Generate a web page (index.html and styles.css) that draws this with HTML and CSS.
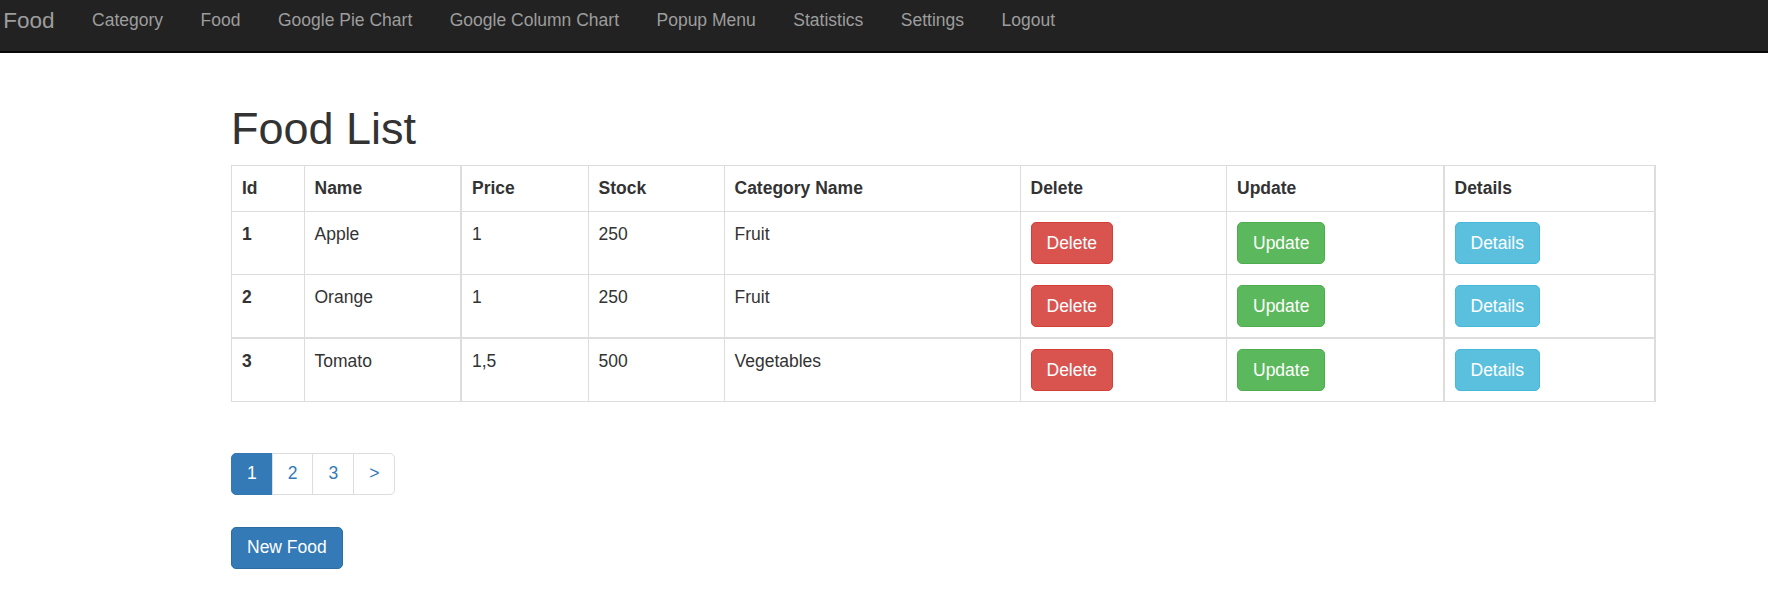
FILE: index.html
```html
<!DOCTYPE html>
<html lang="en">
<head>
<meta charset="utf-8">
<title>Food List</title>
<link rel="stylesheet" href="styles.css">
</head>
<body>
<nav class="navbar">
  <a class="brand" href="#">Food</a>
  <ul class="nav">
    <li><a href="#">Category</a></li>
    <li><a href="#">Food</a></li>
    <li><a href="#">Google Pie Chart</a></li>
    <li><a href="#">Google Column Chart</a></li>
    <li><a href="#">Popup Menu</a></li>
    <li><a href="#">Statistics</a></li>
    <li><a href="#">Settings</a></li>
    <li><a href="#">Logout</a></li>
  </ul>
</nav>
<main class="container">
  <h1 class="title">Food List</h1>
  <table class="table">
    <colgroup>
      <col class="w-id"><col class="w-name"><col class="w-price"><col class="w-stock"><col class="w-cat"><col class="w-del"><col class="w-upd"><col class="w-det">
    </colgroup>
    <thead>
      <tr>
        <th>Id</th><th>Name</th><th class="thick-l">Price</th><th>Stock</th><th>Category Name</th><th>Delete</th><th>Update</th><th class="thick-l thick-r">Details</th>
      </tr>
    </thead>
    <tbody>
      <tr>
        <th>1</th><td>Apple</td><td class="thick-l">1</td><td>250</td><td>Fruit</td>
        <td><a class="btn btn-danger" href="#">Delete</a></td>
        <td><a class="btn btn-success" href="#">Update</a></td>
        <td class="thick-l thick-r"><a class="btn btn-info" href="#">Details</a></td>
      </tr>
      <tr>
        <th>2</th><td>Orange</td><td class="thick-l">1</td><td>250</td><td>Fruit</td>
        <td><a class="btn btn-danger" href="#">Delete</a></td>
        <td><a class="btn btn-success" href="#">Update</a></td>
        <td class="thick-l thick-r"><a class="btn btn-info" href="#">Details</a></td>
      </tr>
      <tr class="thick-t">
        <th>3</th><td>Tomato</td><td class="thick-l">1,5</td><td>500</td><td>Vegetables</td>
        <td><a class="btn btn-danger" href="#">Delete</a></td>
        <td><a class="btn btn-success" href="#">Update</a></td>
        <td class="thick-l thick-r"><a class="btn btn-info" href="#">Details</a></td>
      </tr>
    </tbody>
  </table>
  <ul class="pagination">
    <li class="active"><a href="#">1</a></li>
    <li><a href="#">2</a></li>
    <li><a href="#">3</a></li>
    <li><a href="#">&gt;</a></li>
  </ul>
  <a class="btn btn-primary" href="#">New Food</a>
</main>
</body>
</html>
```

FILE: styles.css
```css
* {
  box-sizing: border-box;
}

body {
  margin: 0;
  font-family: "Liberation Sans", Arial, Helvetica, sans-serif;
  font-size: 17.5px;
  line-height: 25px;
  color: #333;
  background: #fff;
}

a {
  text-decoration: none;
}

/* Navbar */
.navbar {
  display: flex;
  align-items: flex-start;
  height: 53px;
  background: #222;
  border-bottom: 2px solid #080808;
}

.brand {
  display: block;
  padding: 8px 18.75px 0 3.3px;
  font-size: 22.5px;
  line-height: 25px;
  color: #9d9d9d;
}

.nav {
  display: flex;
  list-style: none;
  margin: 0;
  padding: 0;
}

.nav a {
  display: block;
  padding: 8px 18.75px 0;
  line-height: 25px;
  color: #9d9d9d;
}

/* Content */
.container {
  width: 1424px;
  margin-left: 231px;
  padding-top: 51px;
}

.title {
  margin: 0 0 11.5px;
  font-size: 45px;
  line-height: 49.5px;
  font-weight: 500;
  color: #333;
}

.table {
  width: 1423px;
  border-collapse: collapse;
  table-layout: fixed;
}

.w-id { width: 72.5px; }
.w-name { width: 157px; }
.w-price { width: 127px; }
.w-stock { width: 136px; }
.w-cat { width: 296px; }
.w-del { width: 206.5px; }
.w-upd { width: 217px; }
.w-det { width: 211px; }

.table th,
.table td {
  border: 1px solid #ddd;
  padding: 10px;
  text-align: left;
  vertical-align: top;
  line-height: 25px;
}

.table th {
  font-weight: bold;
}

.table .thick-l {
  border-left-width: 2px;
}

.table .thick-r {
  border-right-width: 2px;
}

.table .thick-t th,
.table .thick-t td {
  border-top-width: 2px;
}

/* Buttons */
.btn {
  display: inline-block;
  padding: 7.5px 15px;
  font-size: 17.5px;
  line-height: 25px;
  border: 1px solid transparent;
  border-radius: 5px;
  color: #fff;
  white-space: nowrap;
}

.btn-danger {
  background: #d9534f;
  border-color: #d43f3a;
}

.btn-success {
  background: #5cb85c;
  border-color: #4cae4c;
}

.btn-info {
  background: #5bc0de;
  border-color: #46b8da;
}

.btn-primary {
  background: #337ab7;
  border-color: #2e6da4;
}

/* Pagination */
.pagination {
  display: flex;
  list-style: none;
  padding: 0;
  margin: 50.5px 0 32px;
}

.pagination a {
  display: block;
  padding: 7.5px 15px;
  line-height: 25px;
  border: 1px solid #ddd;
  margin-left: -1px;
  color: #337ab7;
  background: #fff;
}

.pagination li:first-child a {
  margin-left: 0;
  border-radius: 5px 0 0 5px;
}

.pagination li:last-child a {
  border-radius: 0 5px 5px 0;
}

.pagination .active a {
  background: #337ab7;
  border-color: #337ab7;
  color: #fff;
}
```
